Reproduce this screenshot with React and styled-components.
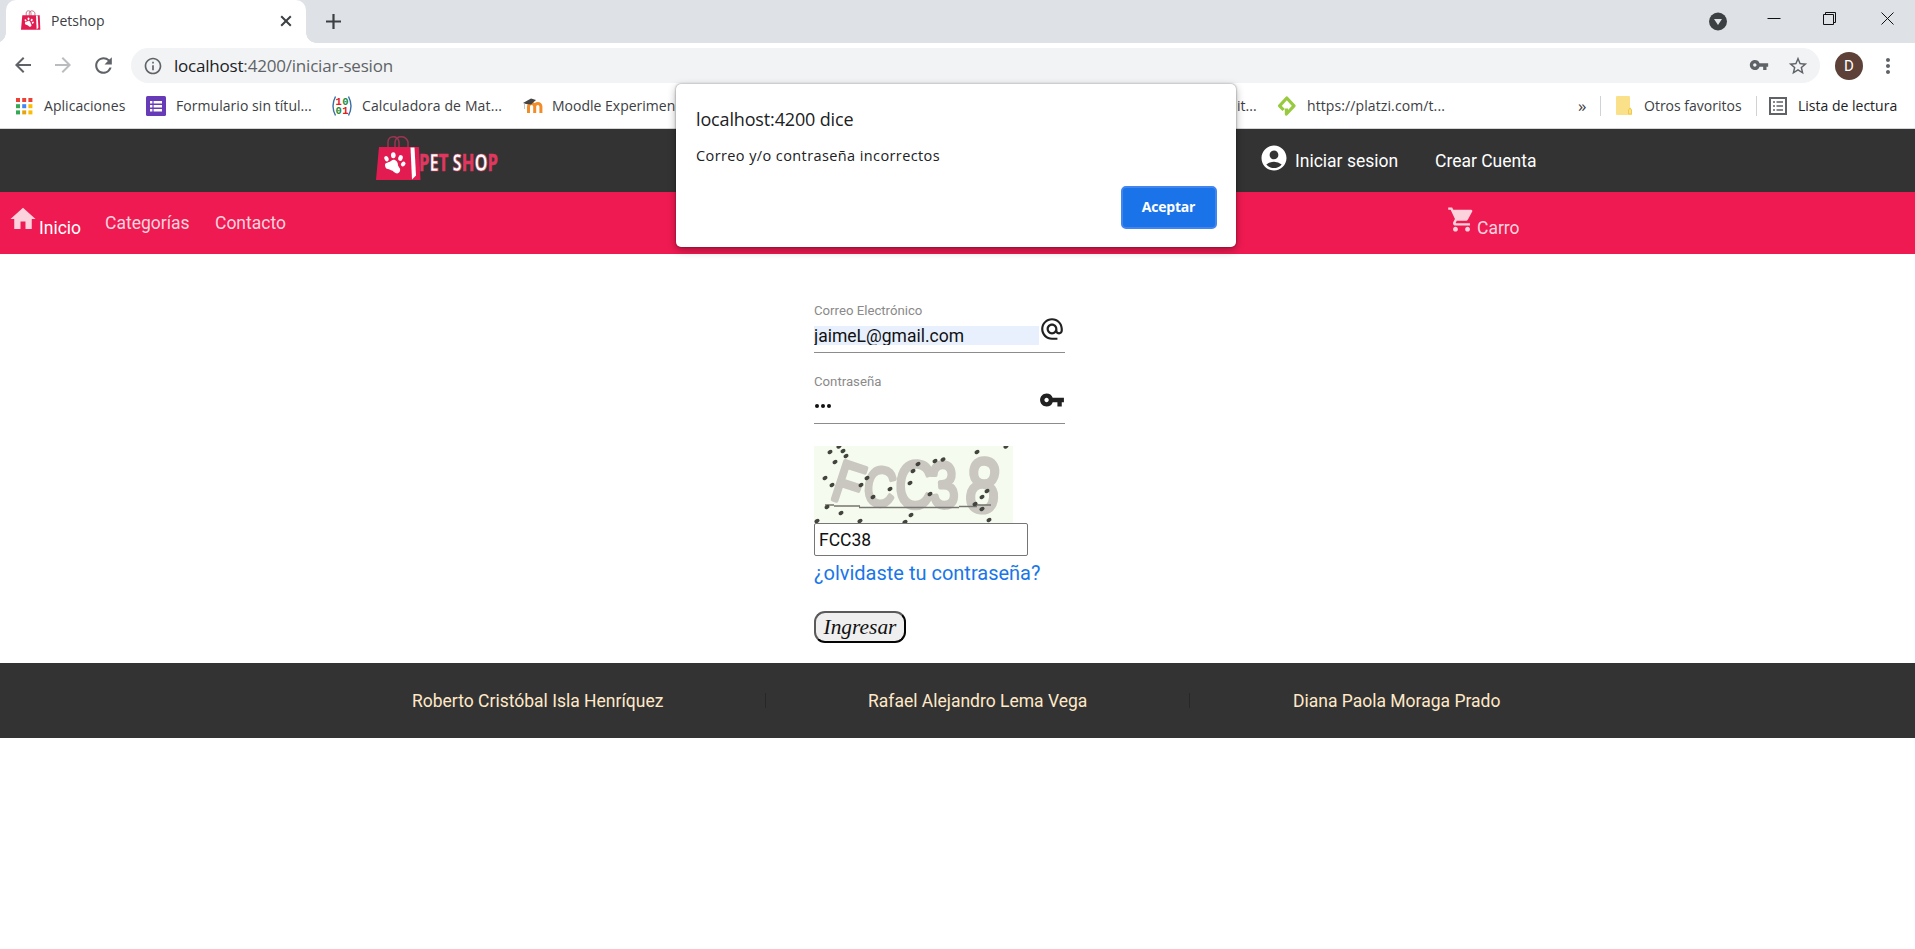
import React from "react";
import styled, { createGlobalStyle } from "styled-components";
import {
  MdHome, MdShoppingCart, MdAccountCircle, MdAlternateEmail, MdVpnKey, MdStarBorder,
  MdInfoOutline, MdRefresh, MdArrowBack, MdArrowForward, MdMoreVert,
} from "react-icons/md";

const Global = createGlobalStyle`
  * { box-sizing: border-box; }
  body { margin: 0; background: #fff; overflow: hidden; }
  svg { display: block; flex: none; }
`;

const ui = `"Open Sans", "Noto Sans", sans-serif`;
const body = `Roboto, "Liberation Sans", sans-serif`;

const Window = styled.div`
  position: relative;
  width: 1915px;
  height: 949px;
  overflow: hidden;
  background: #fff;
  font-family: ${body};
`;

/* Browser chrome */
const TabStrip = styled.div`
  display: flex;
  height: 43px;
  padding-left: 6px;
  background: #dee1e6;
`;
const Tab = styled.div`
  position: relative;
  display: flex;
  align-items: center;
  width: 300px;
  height: 43px;
  padding: 0 12px 2px 15px;
  background: #fff;
  border-radius: 10px 10px 0 0;
  &::before, &::after {
    content: "";
    position: absolute;
    bottom: 0;
    width: 10px;
    height: 10px;
  }
  &::before { left: -10px; background: radial-gradient(circle at 0 0, transparent 9.5px, #fff 10px); }
  &::after { right: -10px; background: radial-gradient(circle at 100% 0, transparent 9.5px, #fff 10px); }
`;
const UiText = styled.span`
  font-family: ${ui};
  font-size: ${(p) => p.$size || 14}px;
  line-height: 20px;
  letter-spacing: ${(p) => p.$track || 0}px;
  color: ${(p) => p.$color || "#3c4043"};
  white-space: nowrap;
`;
const TabTitle = styled(UiText)`
  flex: 1;
  margin-left: 10px;
`;
const NewTab = styled.div`
  display: flex;
  padding: 14px 0 0 20px;
`;
const WindowControls = styled.div`
  display: flex;
  gap: 38px;
  margin-left: auto;
  padding: 8px 16px 0 0;
`;
const Toolbar = styled.div`
  display: flex;
  align-items: center;
  height: 46px;
  padding: 0 15px 1px 11px;
  color: #5f6368;
`;
const NavButtons = styled.div`
  display: flex;
  gap: 16px;
  width: 120px;
`;
const Omnibox = styled.div`
  display: flex;
  align-items: center;
  width: 1690px;
  height: 35px;
  padding: 0 11px 0 12px;
  border-radius: 18px;
  background: #f1f3f4;
`;
const Url = styled(UiText)`
  flex: 1;
  margin-left: 11px;
  b { font-weight: 400; color: #202124; }
`;
const OmniActions = styled.div`
  display: flex;
  gap: 18px;
`;
const Avatar = styled.div`
  display: flex;
  align-items: center;
  justify-content: center;
  width: 28px;
  height: 28px;
  margin: 0 13px 0 15px;
  border-radius: 50%;
  background: #5d4037;
  color: #fff;
  font-size: 15px;
`;
const Bookmarks = styled.div`
  display: flex;
  align-items: center;
  height: 40px;
  padding: 0 0 6px 14px;
  border-bottom: 1px solid #d3d5d8;
`;
const Bookmark = styled.div`
  display: flex;
  align-items: center;
  flex: none;
  gap: ${(p) => p.$gap || 10}px;
  width: ${(p) => p.$w}px;
`;
const Divider = styled.div`
  width: 1px;
  height: 20px;
  margin-right: ${(p) => p.$after}px;
  background: #d0d2d5;
`;

/* Store header */
const TopBar = styled.header`
  display: flex;
  align-items: center;
  height: 63px;
  padding-left: 375px;
  background: #333;
`;
const Account = styled.nav`
  display: flex;
  align-items: center;
  width: 656px;
  margin-left: auto;
  color: #fff;
`;
const NavLink = styled.a`
  display: flex;
  align-items: baseline;
  flex: none;
  width: ${(p) => p.$w}px;
  font-size: 17.5px;
  line-height: 24px;
  color: ${(p) => (p.$active ? "#fff" : "rgba(255,255,255,.82)")};
  white-space: nowrap;
`;
const TopLink = styled(NavLink)`
  align-items: center;
  color: #fff;
  svg { margin: -5px 6px 0 0; }
`;
const MenuBar = styled.nav`
  display: flex;
  align-items: flex-start;
  height: 62px;
  padding: 19px 0 0 8px;
  background: #f01a52;
`;
const IconLink = styled(NavLink)`
  align-items: flex-end;
  height: 29px;
  svg {
    margin: 0 1px 6px 0;
    color: #fcd3dd;
  }
`;

/* Login form */
const Form = styled.form`
  display: flex;
  flex-direction: column;
  align-items: flex-start;
  width: 251px;
  height: 409px;
  margin-left: 814px;
  padding-top: 48px;
`;
const Field = styled.div`
  display: flex;
  justify-content: space-between;
  width: 251px;
  height: 51px;
  margin-bottom: 20px;
  border-bottom: 1px solid #8c8c8c;
`;
const CaptchaBox = styled.div`
  margin-top: 2px;
`;
const FieldLabel = styled.label`
  display: block;
  height: 24px;
  font-size: 13.2px;
  line-height: 18px;
  color: #8a8a8a;
`;
const FieldInput = styled.div`
  width: 225px;
  height: 19px;
  overflow: hidden;
  background: ${(p) => (p.$filled ? "#e8f0fe" : "transparent")};
  font-size: 17.5px;
  line-height: 21px;
  color: #111;
`;
const FieldIcon = styled.div`
  padding-top: 14px;
  color: #212121;
`;
const Dots = styled.div`
  display: flex;
  gap: 1.6px;
  padding: 7px 0 0 1px;
  i { width: 4.4px; height: 4.4px; border-radius: 50%; background: #111; }
`;
const CaptchaInput = styled.div`
  width: 214px;
  height: 33px;
  padding-left: 4px;
  border: 1px solid #767676;
  border-radius: 2px;
  font-size: 17.5px;
  line-height: 32px;
  color: #111;
`;
const Forgot = styled.a`
  height: 55px;
  padding-top: 4px;
  font-size: 20px;
  line-height: 26px;
  color: #1976e8;
  white-space: nowrap;
`;
const Submit = styled.button`
  width: 92px;
  height: 32px;
  padding: 0;
  border: 2px outset #5a5a5a;
  border-radius: 11px;
  background: #efefef;
  font: italic 21.4px/26px "Liberation Serif", serif;
  color: #111;
`;
const Footer = styled.footer`
  display: flex;
  align-items: center;
  height: 75px;
  padding-left: 412px;
  background: #333;
  color: #ffe9c9;
`;
const Author = styled.span`
  flex: none;
  width: ${(p) => p.$w}px;
  font-size: 17.5px;
  white-space: nowrap;
`;
const FooterRule = styled.div`
  width: 1px;
  height: 15px;
  margin-right: ${(p) => p.$after}px;
  background: #272727;
`;

/* Alert over the page */
const Alert = styled.div`
  position: absolute;
  left: 676px;
  top: 84px;
  display: flex;
  flex-direction: column;
  width: 560px;
  height: 163px;
  padding: 22px 19px 18px 20px;
  border-radius: 5px;
  background: #fff;
  box-shadow: 0 0 2px rgba(0,0,0,.5), 0 3px 9px rgba(0,0,0,.32);
`;
const AlertTitle = styled(UiText)`
  line-height: 26px;
  color: #202124;
`;
const AlertText = styled(UiText)`
  margin-top: 14px;
  color: #202124;
`;
const Accept = styled.button`
  align-self: flex-end;
  width: 96px;
  height: 43px;
  margin-top: auto;
  padding: 0 1px 2px 0;
  border: 2px solid #4285ee;
  border-radius: 5px;
  background: #1a73e8;
  font: 700 14px/20px ${ui};
  letter-spacing: -0.2px;
  color: #fff;
`;

const Paw = () => (
  <g fill="#fff">
    <ellipse cx="10.5" cy="23.7" rx="2" ry="2.8" transform="rotate(-25 10.5 23.7)" />
    <ellipse cx="17.3" cy="20.2" rx="2.3" ry="3" />
    <ellipse cx="24.5" cy="23" rx="2.2" ry="3" transform="rotate(18 24.5 23)" />
    <ellipse cx="27.2" cy="29" rx="2" ry="2.6" transform="rotate(45 27.2 29)" />
    <path d="M9 30c0-3 4-2 6-4 3-3 7 0 7 4 0 2 3 3 2 6-1 3-4 3-6 1-2-2-4-2-6-3-2 0-3-2-3-4z" />
  </g>
);
const Bag = () => (
  <g>
    <g fill="none" stroke="#9c3452" strokeWidth="1.5">
      <path d="M12 13V7c0-7 10-7 11 0v7" />
      <path d="M19 13V7c1-7 11-7 13 0v6" />
    </g>
    <path d="M3 12h40l1.5 33H0z" fill="#e21c51" />
    <path d="M34.5 12.5h4l1.5 28-4 4z" fill="#fff" />
    <Paw />
  </g>
);
const LogoMark = styled.svg`
  margin-top: -3px;
`;
const Logo = () => (
  <LogoMark width="126" height="48" viewBox="0 0 126 48">
    <g transform="translate(1 0)"><Bag /></g>
    <text x="44" y="35.5" textLength="79" lengthAdjust="spacingAndGlyphs" fontFamily="Open Sans, sans-serif" fontWeight="700" fontSize="23" fill="#fff" stroke="#d93a62" strokeWidth=".6">
      <tspan fill="#e3365f">P</tspan>E<tspan fill="#e3365f">T</tspan> S<tspan fill="#e3365f">H</tspan>O<tspan fill="#e3365f">P</tspan>
    </text>
  </LogoMark>
);

const AppsIcon = () => (
  <svg width="20" height="20" viewBox="0 0 20 20">
    {["#ea4335", "#ea4335", "#ea4335", "#34a853", "#4285f4", "#fbbc04", "#34a853", "#e5a50a", "#fbbc04"].map((c, i) => (
      <rect key={i} x={2 + (i % 3) * 6.2} y={2 + Math.floor(i / 3) * 6.2} width="4" height="4" fill={c} />
    ))}
  </svg>
);
const FormsIcon = () => (
  <svg width="20" height="20" viewBox="0 0 20 20">
    <rect width="20" height="20" rx="1.5" fill="#673ab7" />
    <path d="M4 5h2.4v2.4H4zM4 9h2.4v2.4H4zM4 13h2.4v2.4H4zM7.6 5H16v2.4H7.6zM7.6 9H16v2.4H7.6zM7.6 13H16v2.4H7.6z" fill="#fff" />
  </svg>
);
const MatrixIcon = () => (
  <svg width="20" height="20" viewBox="0 0 20 20">
    <path d="M3.5 0.5Q-1.5 10 3.5 19.5M16.5 0.5Q21.5 10 16.5 19.5" fill="none" stroke="#3a6ea5" strokeWidth="1.4" />
    <g fontFamily="Liberation Mono, monospace" fontWeight="700" fontSize="10.5">
      <text x="3.6" y="9" fill="#e02020">1</text>
      <text x="10.2" y="9" fill="#1d8a3a">0</text>
      <text x="3.6" y="18" fill="#1d8a3a">0</text>
      <text x="10.2" y="18" fill="#e02020">1</text>
    </g>
  </svg>
);
const MoodleIcon = () => (
  <svg width="20" height="20" viewBox="0 0 20 20">
    <path d="M5.5 17V10.5a3.1 3.1 0 0 1 6.2 0V17M11.7 10.5a3.1 3.1 0 0 1 6.2 0V17" fill="none" stroke="#f28c28" strokeWidth="3" />
    <path d="M0 7 8 2.5l5 1.5-5 4.5-5-.6z" fill="#444" />
    <path d="M1.5 7v6" stroke="#aaa" strokeWidth=".7" />
  </svg>
);
const PlatziIcon = () => (
  <svg width="20" height="20" viewBox="0 0 20 20">
    <path d="M6.6 14 2.6 9.8 9.8 2 17 9.8 9.4 18V12.500" fill="none" stroke="#98ca3f" strokeWidth="3.2" strokeLinejoin="round" />
  </svg>
);
const FolderIcon = () => (
  <svg width="16" height="19" viewBox="0 0 16 19">
    <path d="M1 0h12a1 1 0 0 1 1 1v10l2 3v5H1a1 1 0 0 1-1-1V1a1 1 0 0 1 1-1z" fill="#fbe08a" />
    <path d="M12.5 18v-4l1.5-2 1.5 2v4z" fill="none" stroke="#efc94c" />
  </svg>
);
const ListIcon = () => (
  <svg width="18" height="18" viewBox="0 0 18 18">
    <rect x="1" y="1" width="16" height="16" fill="none" stroke="#5f6368" strokeWidth="2" />
    <path d="M4 5h2M7.5 5H14M4 9h2M7.5 9H14M4 13h2M7.5 13H14" stroke="#5f6368" strokeWidth="1.7" />
  </svg>
);

const specks = [
  [16, 6], [25, 0.5], [29, 5], [32, 10], [21, 16], [11, 32], [18, 39], [47, 39], [53, 32], [59, 51],
  [76, 43], [96, 37], [99, 25], [104, 18], [121, 15], [129, 13.5], [116, 48], [163, 6], [192, 0.5],
  [173, 45], [168, 51], [161, 58], [168, 63], [13, 61], [27, 67], [3, 75], [46, 75], [91, 76], [97, 69], [175, 74],
];
const letters = [
  ["F", 15, 52, 58, 18], ["C", 48, 57, 54, 8], ["C", 80, 60, 66, 4], ["3", 117, 62, 64, -4], ["8", 150, 64, 76, 5],
];
const Captcha = () => (
  <svg width="199" height="77" viewBox="0 0 199 77">
    <defs><filter id="soft"><feGaussianBlur stdDeviation=".7" /></filter></defs>
    <rect width="199" height="77" fill="#f5fcef" />
    <g filter="url(#soft)">
      <g fontFamily="Liberation Sans, sans-serif" fill="#c9c7c0" stroke="#c9c7c0" strokeWidth="4.5" strokeLinejoin="round">
        {letters.map(([c, x, y, s, r], i) => (
          <text key={i} fontSize={s} transform={`translate(${x} ${y}) rotate(${r}) scale(.8 1)`}>{c}</text>
        ))}
      </g>
      <path d="M11 59h9M20 60h26M45 61.5h100M145 60.5h18M160 59h17" stroke="#77766f" strokeWidth="1.7" />
    </g>
    {specks.map(([x, y], i) => (
      <ellipse key={i} cx={x} cy={y} rx="2.7" ry="1.9" fill="#44443e" transform={`rotate(-30 ${x} ${y})`} />
    ))}
  </svg>
);

export default function App() {
  return (
    <Window>
      <Global />
      <TabStrip>
        <Tab>
          <svg width="20" height="21" viewBox="0 0 46 48"><Bag /></svg>
          <TabTitle>Petshop</TabTitle>
          <svg width="16" height="16" viewBox="0 0 16 16"><path d="M3.2 3.2l9.6 9.6M12.8 3.2l-9.6 9.6" stroke="#3c4043" strokeWidth="2" /></svg>
        </Tab>
        <NewTab>
          <svg width="15" height="15" viewBox="0 0 15 15"><path d="M7.5 0v15M0 7.5h15" stroke="#3c4043" strokeWidth="2.2" /></svg>
        </NewTab>
        <WindowControls>
          <svg width="20" height="26" viewBox="0 0 20 26"><circle cx="11" cy="13.5" r="9" fill="#3c4043" /><path d="M7 11h8l-4 6z" fill="#dee1e6" /></svg>
          <svg width="18" height="22" viewBox="0 0 18 22"><path d="M2.5 10.5h13" stroke="#111" /></svg>
          <svg width="18" height="22" viewBox="0 0 18 22"><path d="M2.5 6.5h10v10h-10zM4.5 6v-1.500h10v10h-2" fill="none" stroke="#111" /></svg>
          <svg width="22" height="22" viewBox="0 0 22 22"><path d="M4.500 4.500l12 12M16.500 4.500l-12 12" stroke="#111" /></svg>
        </WindowControls>
      </TabStrip>
      <Toolbar>
        <NavButtons>
          <MdArrowBack size={24} />
          <MdArrowForward size={24} color="#babcbe" />
          <MdRefresh size={25} />
        </NavButtons>
        <Omnibox>
          <MdInfoOutline size={20} />
          <Url $size={17} $track={-0.2} $color="#5f6368"><b>localhost</b>:4200/iniciar-sesion</Url>
          <OmniActions>
            <MdVpnKey size={20} />
            <MdStarBorder size={22} />
          </OmniActions>
        </Omnibox>
        <Avatar>D</Avatar>
        <MdMoreVert size={24} />
      </Toolbar>
      <Bookmarks>
        <Bookmark $w={132}><AppsIcon /><UiText $track={0.05}>Aplicaciones</UiText></Bookmark>
        <Bookmark $w={186}><FormsIcon /><UiText $track={0.05}>Formulario sin títul...</UiText></Bookmark>
        <Bookmark $w={191}><MatrixIcon /><UiText $track={0.13}>Calculadora de Mat...</UiText></Bookmark>
        <Bookmark $w={714} $gap={9}><MoodleIcon /><UiText>Moodle Experimen</UiText></Bookmark>
        <Bookmark $w={40}><UiText>it...</UiText></Bookmark>
        <Bookmark $w={301}><PlatziIcon /><UiText $track={0.1}>https://platzi.com/t...</UiText></Bookmark>
        <Bookmark $w={22}><UiText $size={17}>»</UiText></Bookmark>
        <Divider $after={15} />
        <Bookmark $w={140} $gap={12}><FolderIcon /><UiText>Otros favoritos</UiText></Bookmark>
        <Divider $after={12} />
        <Bookmark $w={140} $gap={11}><ListIcon /><UiText $color="#202124">Lista de lectura</UiText></Bookmark>
      </Bookmarks>
      <TopBar>
        <Logo />
        <Account>
          <TopLink $w={176}><MdAccountCircle size={30} />Iniciar sesion</TopLink>
          <TopLink $w={110}>Crear Cuenta</TopLink>
        </Account>
      </TopBar>
      <MenuBar>
        <IconLink $w={97} $active><MdHome size={30} />Inicio</IconLink>
        <NavLink $w={110}>Categorías</NavLink>
        <NavLink $w={1232}>Contacto</NavLink>
        <IconLink $w={90}><MdShoppingCart size={29} />Carro</IconLink>
      </MenuBar>
      <Form>
        <Field>
          <div>
            <FieldLabel>Correo Electrónico</FieldLabel>
            <FieldInput $filled>jaimeL@gmail.com</FieldInput>
          </div>
          <FieldIcon><MdAlternateEmail size={26} /></FieldIcon>
        </Field>
        <Field>
          <div>
            <FieldLabel>Contraseña</FieldLabel>
            <FieldInput><Dots><i /><i /><i /></Dots></FieldInput>
          </div>
          <FieldIcon><MdVpnKey size={26} /></FieldIcon>
        </Field>
        <CaptchaBox><Captcha /></CaptchaBox>
        <CaptchaInput>FCC38</CaptchaInput>
        <Forgot>¿olvidaste tu contraseña?</Forgot>
        <Submit type="button">Ingresar</Submit>
      </Form>
      <Footer>
        <Author $w={353}>Roberto Cristóbal Isla Henríquez</Author>
        <FooterRule $after={102} />
        <Author $w={321}>Rafael Alejandro Lema Vega</Author>
        <FooterRule $after={103} />
        <Author $w={220}>Diana Paola Moraga Prado</Author>
      </Footer>
      <Alert role="alertdialog">
        <AlertTitle $size={18} $track={-0.15}>localhost:4200 dice</AlertTitle>
        <AlertText $size={14.5} $track={0.4}>Correo y/o contraseña incorrectos</AlertText>
        <Accept>Aceptar</Accept>
      </Alert>
    </Window>
  );
}
